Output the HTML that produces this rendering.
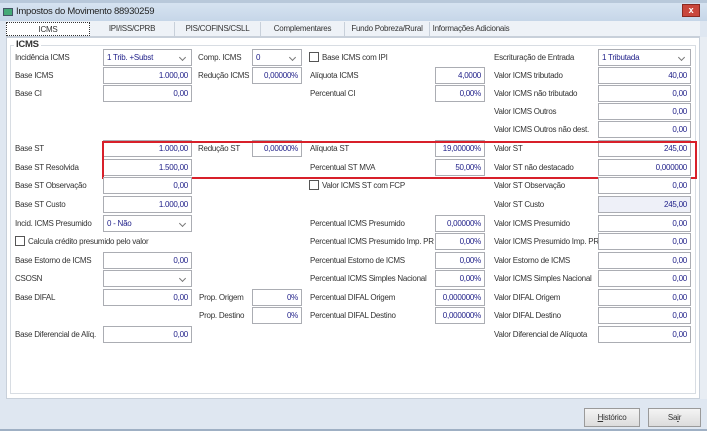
<!DOCTYPE html><html><head><meta charset="utf-8"><style>
*{margin:0;padding:0;box-sizing:border-box}
body{width:707px;height:431px;overflow:hidden;background:#dfe7f1;font-family:"Liberation Sans",sans-serif;font-size:8px;letter-spacing:-0.25px;color:#333;position:relative}
.a{position:absolute;white-space:nowrap}
.l{position:absolute;white-space:nowrap;line-height:16px}
.i,.s{position:absolute;height:17px;background:#fff;border:1px solid #abadb3;color:#22228a;display:flex;align-items:center;white-space:nowrap}
.i{justify-content:flex-end;padding-right:3px}
.s{padding-left:3px}
.s:after{content:"";position:absolute;right:6px;top:5px;width:4px;height:4px;border-right:1px solid #777;border-bottom:1px solid #777;transform:rotate(45deg)}
.c{display:inline-block;width:10px;height:10px;border:1px solid #555;background:#fff;vertical-align:-2px;margin-right:3px}
.tab{position:absolute;top:22px;height:14px;line-height:14px;text-align:center;border-right:1px solid #c8d0da;background:#eef2f7;white-space:nowrap;overflow:hidden}
.btn{position:absolute;top:408px;height:19px;border:1px solid #9a9a9a;background:linear-gradient(#f4f4f4,#dcdcdc);text-align:center;line-height:17px}
</style></head><body>
<div class="a" style="left:0;top:0;width:707px;height:3px;background:#b8c8da"></div>
<div class="a" style="left:0;top:3px;width:707px;height:18px;background:linear-gradient(#d6e3f1,#c6d6e8)"></div>
<div class="a" style="left:3px;top:8px;width:10px;height:8px;background:#4a7;border:1px solid #456"></div>
<div class="a" style="left:16px;top:5px;font-size:9.5px;color:#222;line-height:14px">Impostos do Movimento 88930259</div>
<div class="a" style="left:682px;top:4px;width:18px;height:13px;background:#c9473c;border:1px solid #8a2a22;color:#fff;font-size:9px;text-align:center;line-height:11px;font-weight:bold">x</div>
<div class="a" style="left:6px;top:21px;width:694px;height:16px;background:#eef2f7;border-bottom:1px solid #c8d0da"></div>
<div class="tab" style="left:6px;width:84px;background:#fff;border:1px dotted #333">ICMS</div>
<div class="tab" style="left:90px;width:85px">IPI/ISS/CPRB</div>
<div class="tab" style="left:175px;width:86px">PIS/COFINS/CSLL</div>
<div class="tab" style="left:261px;width:84px">Complementares</div>
<div class="tab" style="left:345px;width:85px">Fundo Pobreza/Rural</div>
<div class="tab" style="left:430px;width:82px;border:none">Informações Adicionais</div>
<div class="a" style="left:6px;top:37px;width:694px;height:362px;background:#fff;border:1px solid #c8d0da"></div>
<div class="a" style="left:10px;top:45px;width:686px;height:349px;border:1px solid #d8dde3"></div>
<div class="a" style="left:14px;top:39px;background:#fff;font-weight:bold;font-size:9.5px;padding:0 2px">ICMS</div>
<div class="a" style="left:700px;top:37px;width:7px;height:362px;background:#e8edf3"></div>

<div class="l" style="left:15px;top:50px">Incidência ICMS</div><div class="s" style="left:103px;top:49px;width:89px">1 Trib. +Subst</div>
<div class="l" style="left:198px;top:50px">Comp. ICMS</div><div class="s" style="left:252px;top:49px;width:50px">0</div>
<div class="l" style="left:309px;top:50px"><span class="c"></span>Base ICMS com IPI</div>
<div class="l" style="left:494px;top:50px">Escrituração de Entrada</div><div class="s" style="left:598px;top:49px;width:93px">1 Tributada</div>

<div class="l" style="left:15px;top:68px">Base ICMS</div><div class="i" style="left:103px;top:67px;width:89px">1.000,00</div>
<div class="l" style="left:198px;top:68px">Redução ICMS</div><div class="i" style="left:252px;top:67px;width:50px">0,00000%</div>
<div class="l" style="left:310px;top:68px">Alíquota ICMS</div><div class="i" style="left:435px;top:67px;width:50px">4,0000</div>
<div class="l" style="left:494px;top:68px">Valor ICMS tributado</div><div class="i" style="left:598px;top:67px;width:93px">40,00</div>

<div class="l" style="left:15px;top:86px">Base CI</div><div class="i" style="left:103px;top:85px;width:89px">0,00</div>
<div class="l" style="left:310px;top:86px">Percentual CI</div><div class="i" style="left:435px;top:85px;width:50px">0,00%</div>
<div class="l" style="left:494px;top:86px">Valor ICMS não tributado</div><div class="i" style="left:598px;top:85px;width:93px">0,00</div>

<div class="l" style="left:494px;top:104px">Valor ICMS Outros</div><div class="i" style="left:598px;top:103px;width:93px">0,00</div>
<div class="l" style="left:494px;top:122px">Valor ICMS Outros não dest.</div><div class="i" style="left:598px;top:121px;width:93px">0,00</div>

<div class="l" style="left:15px;top:141px">Base ST</div><div class="i" style="left:103px;top:140px;width:89px">1.000,00</div>
<div class="l" style="left:198px;top:141px">Redução ST</div><div class="i" style="left:252px;top:140px;width:50px">0,00000%</div>
<div class="l" style="left:310px;top:141px">Alíquota ST</div><div class="i" style="left:435px;top:140px;width:50px">19,00000%</div>
<div class="l" style="left:494px;top:141px">Valor ST</div><div class="i" style="left:598px;top:140px;width:93px">245,00</div>

<div class="l" style="left:15px;top:160px">Base ST Resolvida</div><div class="i" style="left:103px;top:159px;width:89px">1.500,00</div>
<div class="l" style="left:310px;top:160px">Percentual ST MVA</div><div class="i" style="left:435px;top:159px;width:50px">50,00%</div>
<div class="l" style="left:494px;top:160px">Valor ST não destacado</div><div class="i" style="left:598px;top:159px;width:93px">0,000000</div>
<div class="a" style="left:102px;top:141px;width:595px;height:38px;border:2px solid #d8202a"></div>

<div class="l" style="left:15px;top:178px">Base ST Observação</div><div class="i" style="left:103px;top:177px;width:89px">0,00</div>
<div class="l" style="left:309px;top:178px"><span class="c"></span>Valor ICMS ST com FCP</div>
<div class="l" style="left:494px;top:178px">Valor ST Observação</div><div class="i" style="left:598px;top:177px;width:93px">0,00</div>

<div class="l" style="left:15px;top:197px">Base ST Custo</div><div class="i" style="left:103px;top:196px;width:89px">1.000,00</div>
<div class="l" style="left:494px;top:197px">Valor ST Custo</div><div class="i" style="left:598px;top:196px;width:93px;background:#eef0f8">245,00</div>

<div class="l" style="left:15px;top:216px">Incid. ICMS Presumido</div><div class="s" style="left:103px;top:215px;width:89px">0 - Não</div>
<div class="l" style="left:310px;top:216px">Percentual ICMS Presumido</div><div class="i" style="left:435px;top:215px;width:50px">0,00000%</div>
<div class="l" style="left:494px;top:216px">Valor ICMS Presumido</div><div class="i" style="left:598px;top:215px;width:93px">0,00</div>

<div class="l" style="left:15px;top:234px"><span class="c"></span>Calcula crédito presumido pelo valor</div>
<div class="l" style="left:310px;top:234px">Percentual ICMS Presumido Imp. PR</div><div class="i" style="left:435px;top:233px;width:50px">0,00%</div>
<div class="l" style="left:494px;top:234px">Valor ICMS Presumido Imp. PR</div><div class="i" style="left:598px;top:233px;width:93px">0,00</div>

<div class="l" style="left:15px;top:253px">Base Estorno de ICMS</div><div class="i" style="left:103px;top:252px;width:89px">0,00</div>
<div class="l" style="left:310px;top:253px">Percentual Estorno de ICMS</div><div class="i" style="left:435px;top:252px;width:50px">0,00%</div>
<div class="l" style="left:494px;top:253px">Valor Estorno de ICMS</div><div class="i" style="left:598px;top:252px;width:93px">0,00</div>

<div class="l" style="left:15px;top:271px">CSOSN</div><div class="s" style="left:103px;top:270px;width:89px"></div>
<div class="l" style="left:310px;top:271px">Percentual ICMS Simples Nacional</div><div class="i" style="left:435px;top:270px;width:50px">0,00%</div>
<div class="l" style="left:494px;top:271px">Valor ICMS Simples Nacional</div><div class="i" style="left:598px;top:270px;width:93px">0,00</div>

<div class="l" style="left:15px;top:290px">Base DIFAL</div><div class="i" style="left:103px;top:289px;width:89px">0,00</div>
<div class="l" style="left:199px;top:290px">Prop. Origem</div><div class="i" style="left:252px;top:289px;width:50px">0%</div>
<div class="l" style="left:310px;top:290px">Percentual DIFAL Origem</div><div class="i" style="left:435px;top:289px;width:50px">0,000000%</div>
<div class="l" style="left:494px;top:290px">Valor DIFAL Origem</div><div class="i" style="left:598px;top:289px;width:93px">0,00</div>

<div class="l" style="left:199px;top:308px">Prop. Destino</div><div class="i" style="left:252px;top:307px;width:50px">0%</div>
<div class="l" style="left:310px;top:308px">Percentual DIFAL Destino</div><div class="i" style="left:435px;top:307px;width:50px">0,000000%</div>
<div class="l" style="left:494px;top:308px">Valor DIFAL Destino</div><div class="i" style="left:598px;top:307px;width:93px">0,00</div>

<div class="l" style="left:15px;top:327px">Base Diferencial de Alíq.</div><div class="i" style="left:103px;top:326px;width:89px">0,00</div>
<div class="l" style="left:494px;top:327px">Valor Diferencial de Alíquota</div><div class="i" style="left:598px;top:326px;width:93px">0,00</div>

<div class="btn" style="left:584px;width:56px"><u>H</u>istórico</div>
<div class="btn" style="left:648px;width:53px">Sa<u>i</u>r</div>
<div class="a" style="left:0;top:429px;width:707px;height:2px;background:#9fb0c4"></div>
</body></html>
